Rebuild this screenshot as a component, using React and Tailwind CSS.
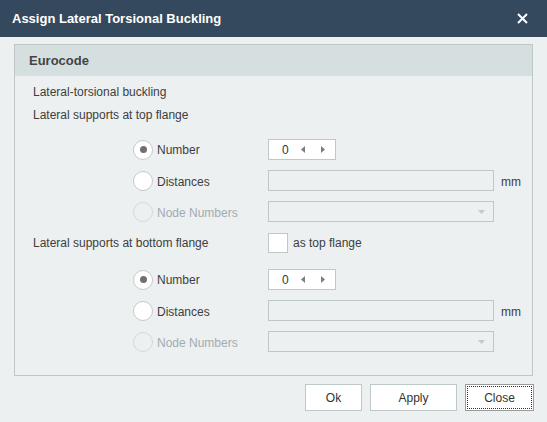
import React from 'react';

const font = { fontFamily: '"Liberation Sans", Arial, sans-serif' };

const Radio = ({ checked, disabled }) => (
  <span
    className={`flex h-[20px] w-[20px] items-center justify-center rounded-full border ${
      disabled ? 'border-[#d3d9da] bg-transparent' : 'border-[#c2cacb] bg-white'
    }`}
  >
    {checked && <span className="h-[7px] w-[7px] rounded-full bg-[#6f6f6f]" />}
  </span>
);

const Spinner = () => (
  <div className="flex h-[21px] w-[68px] items-center border border-[#bfc8c9] bg-white text-[12px] text-[#333]">
    <span className="ml-[13px] w-[10px]">0</span>
    <svg className="ml-[9px]" width="4" height="7" viewBox="0 0 4 7">
      <path d="M4 0 L0 3.5 L4 7 Z" fill="#7d7d7d" />
    </svg>
    <svg className="ml-[16px]" width="4" height="7" viewBox="0 0 4 7">
      <path d="M0 0 L4 3.5 L0 7 Z" fill="#7d7d7d" />
    </svg>
  </div>
);

const TextBox = () => (
  <div className="h-[21px] w-[226px] border border-[#bfc8c9] bg-[#ecf0f1]" />
);

const Dropdown = () => (
  <div className="flex h-[21px] w-[226px] items-center justify-end border border-[#bfc8c9] bg-[#ecf0f1] pr-[8px]">
    <svg width="7" height="4" viewBox="0 0 7 4">
      <path d="M0 0 L7 0 L3.5 4 Z" fill="#c4c9cc" />
    </svg>
  </div>
);

const OptionRows = () => (
  <div className="flex flex-col">
    <div className="flex h-[31px] items-center">
      <div className="ml-[100px] flex w-[135px] items-center">
        <Radio checked />
        <span className="ml-[4px] text-[#3d3d3d]">Number</span>
      </div>
      <Spinner />
    </div>
    <div className="flex h-[31px] items-center">
      <div className="ml-[100px] flex w-[135px] items-center">
        <Radio />
        <span className="ml-[4px] pt-[2px] text-[#3d3d3d]">Distances</span>
      </div>
      <TextBox />
      <span className="ml-[7px] pt-[2px] text-[#3d3d3d]">mm</span>
    </div>
    <div className="flex h-[31px] items-center">
      <div className="ml-[100px] flex w-[135px] items-center">
        <Radio disabled />
        <span className="ml-[4px] pt-[3px] text-[#a3abb2]">Node Numbers</span>
      </div>
      <Dropdown />
    </div>
  </div>
);

export default function App() {
  return (
    <div className="flex h-[422px] w-[547px] flex-col bg-[#ecf0f1] text-[12px]" style={font}>
      {/* Title bar */}
      <div className="flex h-[37px] shrink-0 items-center justify-between bg-[#34495e] pl-[12px] pr-[19px]">
        <span className="text-[13px] font-bold text-white">Assign Lateral Torsional Buckling</span>
        <svg width="11" height="11" viewBox="0 0 11 11">
          <path d="M1 1 L10 10 M10 1 L1 10" stroke="#ffffff" strokeWidth="2" />
        </svg>
      </div>

      {/* Group box */}
      <div className="mx-[14px] mt-[7px] flex h-[332px] flex-col border border-[#bfc8c9]">
        <div className="flex h-[31px] shrink-0 items-center bg-[#d6dfe0] pl-[14px]">
          <span className="text-[13px] font-bold text-[#444]">Eurocode</span>
        </div>
        <div className="flex flex-col pl-[18px] pt-[4px] text-[#3d3d3d]">
          <div className="flex h-[23px] items-center">Lateral-torsional buckling</div>
          <div className="flex h-[23px] items-center">Lateral supports at top flange</div>
          <div className="mt-[8px]">
            <OptionRows />
          </div>
          <div className="mt-[5px] flex h-[22px] items-center">
            <span className="w-[235px]">Lateral supports at bottom flange</span>
            <span className="h-[20px] w-[20px] border border-[#bfc8c9] bg-white" />
            <span className="ml-[5px]">as top flange</span>
          </div>
          <div className="mt-[10px]">
            <OptionRows />
          </div>
        </div>
      </div>

      {/* Buttons */}
      <div className="mr-[13px] mt-[8px] flex justify-end gap-[8px]">
        <button className="h-[27px] w-[57px] border border-[#bfc8c9] bg-white text-[12px] text-[#333]">Ok</button>
        <button className="h-[27px] w-[87px] border border-[#bfc8c9] bg-white text-[12px] text-[#333]">Apply</button>
        <button className="flex h-[27px] w-[69px] items-center justify-center border border-[#9a9a9a] bg-white p-[1px] text-[12px] text-[#333]">
          <span className="flex h-full w-full items-center justify-center border border-dotted border-[#333]">Close</span>
        </button>
      </div>
    </div>
  );
}
